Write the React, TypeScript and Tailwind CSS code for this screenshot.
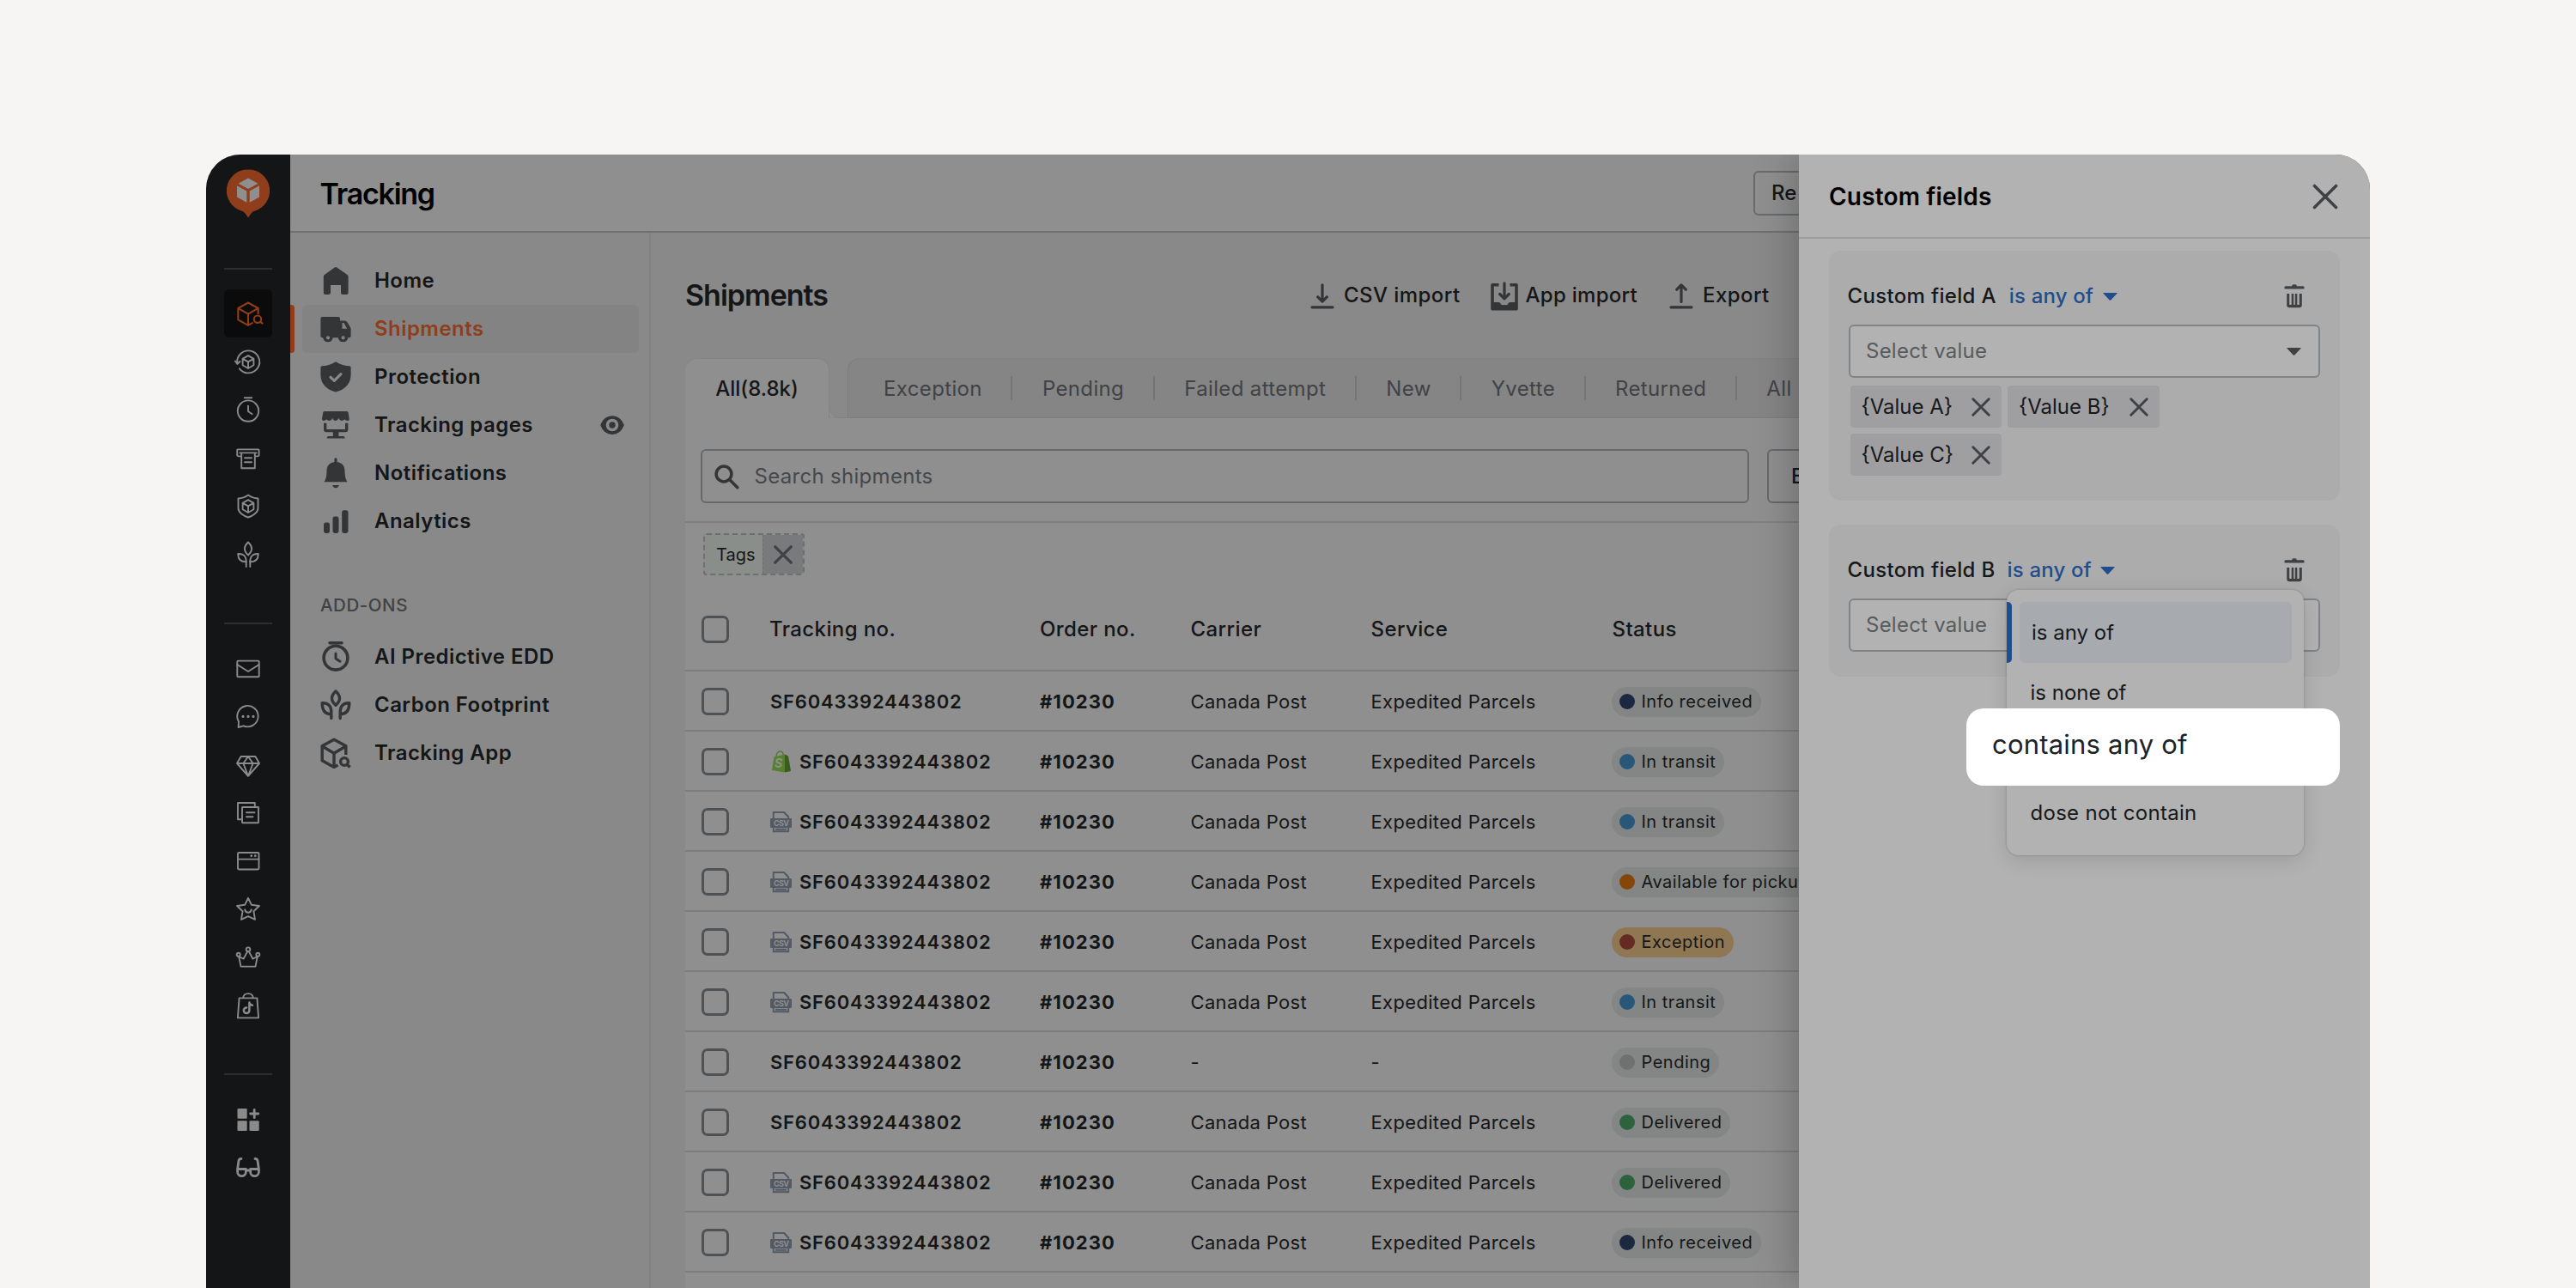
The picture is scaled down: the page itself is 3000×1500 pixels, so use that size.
import type { ReactNode } from "react";

type Source = "none" | "shopify" | "csv";

const rows: { source: Source; carrier: string; service: string; status: string }[] = [
    { source: "none", carrier: "Canada Post", service: "Expedited Parcels", status: "Info received" },
    { source: "shopify", carrier: "Canada Post", service: "Expedited Parcels", status: "In transit" },
    { source: "csv", carrier: "Canada Post", service: "Expedited Parcels", status: "In transit" },
    { source: "csv", carrier: "Canada Post", service: "Expedited Parcels", status: "Available for pickup" },
    { source: "csv", carrier: "Canada Post", service: "Expedited Parcels", status: "Exception" },
    { source: "csv", carrier: "Canada Post", service: "Expedited Parcels", status: "In transit" },
    { source: "none", carrier: "-", service: "-", status: "Pending" },
    { source: "none", carrier: "Canada Post", service: "Expedited Parcels", status: "Delivered" },
    { source: "csv", carrier: "Canada Post", service: "Expedited Parcels", status: "Delivered" },
    { source: "csv", carrier: "Canada Post", service: "Expedited Parcels", status: "Info received" },
];

const dotColors: Record<string, string> = {
    "Info received": "bg-[#1b2840]",
    "In transit": "bg-[#28577a]",
    "Available for pickup": "bg-[#844709]",
    Exception: "bg-[#652b22]",
    Pending: "bg-[#6f7070]",
    Delivered: "bg-[#2c633c]",
};

const tabs = ["Exception", "Pending", "Failed attempt", "New", "Yvette", "Returned", "All"];

/* ---------- icons ---------- */

function RailIcon({ children, width = 1.9 }: { children: ReactNode; width?: number }) {
    return (
        <svg viewBox="0 0 30 30" className="h-[30px] w-[30px] overflow-visible" fill="none" stroke="currentColor" strokeWidth={width} strokeLinejoin="round" strokeLinecap="round">
            {children}
        </svg>
    );
}

function NavIcon({ children }: { children: ReactNode }) {
    return (
        <svg viewBox="0 0 36 36" className="h-9 w-9 shrink-0 overflow-visible text-[#343537]" fill="currentColor">
            {children}
        </svg>
    );
}

const smallCube = <path d="M15 8.2l6.4 3.6v7.5L15 23l-6.4-3.7v-7.5zM8.6 11.8l6.4 3.6 6.4-3.6M15 15.4V23" />;

const railMain = [
    <RailIcon key="return">
        <path d="M2.4 17.5A13 13 0 1 1 4.9 23.3" />
        <path d="M0 14.6l2.5 3.2 3-2.8" />
        {smallCube}
    </RailIcon>,
    <RailIcon key="timer">
        <circle cx="15" cy="16.6" r="12.2" />
        <path d="M10.8 1.2h8.4M15 10.6v6.4l4.6 3.2" />
    </RailIcon>,
    <RailIcon key="receipt">
        <path d="M6.8 13.4H4a1.8 1.8 0 0 1-1.8-1.8V6.4A1 1 0 0 1 3.2 5.4h23.4a1 1 0 0 1 1 1v5.2a1.8 1.8 0 0 1-1.8 1.8H23" />
        <path d="M5.2 9.4h19.4M7.2 9.4v17.8h15.6V9.4M11 15.3h8M11 20.2h8" />
    </RailIcon>,
    <RailIcon key="shield">
        <path d="M15 2.6c3.5 2.5 7.4 3.7 11.5 3.9v11.2c0 5.2-6.500 9.200-11.500 10.800C10 26.900 3.500 22.900 3.500 17.700V6.500C7.600 6.300 11.500 5.100 15 2.600z" />
        {smallCube}
    </RailIcon>,
    <RailIcon key="plant">
        <path d="M15 1.500c5.400 5 5.400 10 0 15-5.400-5-5.400-10 0-15z" />
        <path d="M3.200 15c6-.4 9.500 2.400 9.500 9.400-6.500 0-9.500-3.400-9.500-9.400zM26.800 15c-6-.4-9.500 2.400-9.500 9.400 6.500 0 9.500-3.400 9.500-9.400z" />
        <path d="M12.700 24v6M17.300 24v6" />
    </RailIcon>,
];

const railApps = [
    <RailIcon key="mail">
        <rect x="2.300" y="5.600" width="25.400" height="18.700" rx="1" />
        <path d="M2.300 10l12.700 8 12.700-8" />
    </RailIcon>,
    <RailIcon key="chat">
        <path d="M3.600 27l.4-6.600A12.200 12.200 0 1 1 9.600 25.300z" />
        <path d="M9 14.400h.01M15 14.400h.01M21 14.400h.01" strokeWidth="3.200" />
    </RailIcon>,
    <RailIcon key="diamond">
        <path d="M6.600 5h16.800l4.600 8-13 14.800L2 13zM2 13h26M15 5l-5.600 8L15 27.800 20.600 13z" />
    </RailIcon>,
    <RailIcon key="copy">
        <rect x="8" y="8" width="19" height="18.200" rx=".5" />
        <path d="M8 22.200H3V3h19.800v5M13 14.300h9.500M13 19.300h7.500" />
    </RailIcon>,
    <RailIcon key="window">
        <rect x="3" y="5" width="24.500" height="19.500" rx="1.200" />
        <path d="M3 12.600h24.500" />
        <path d="M18.800 8.700h.01M23.300 8.700h.01" strokeWidth="2.800" />
    </RailIcon>,
    <RailIcon key="star">
        <path d="M15 1.800l3.900 8 9 1.200-6.500 6.200 1.600 9.700L15 23.200l-8 3.700 1.600-9.700L2.100 11l9-1.200z" />
        <path d="M11.200 15.200c1 4.800 6.600 4.800 7.600 0" />
    </RailIcon>,
    <RailIcon key="crown">
        <path d="M4.200 14l2.300 11.600h17L25.800 14l-5.400 2.600L15.900 8.200h-1.800L9.600 16.600z" />
        <circle cx="15" cy="5.700" r="2.300" />
        <circle cx="3.700" cy="11.800" r="2" />
        <circle cx="26.300" cy="11.800" r="2" />
    </RailIcon>,
    <RailIcon key="bag">
        <path d="M4.600 6.400h20.800l1.700 23H2.900zM9 6.400c1-7 11-7 12 0" />
        <path d="M16.400 11.600v9.200a3.300 3.300 0 1 1-3.300-3.300M16.400 11.600c.4 2 1.600 3 3.600 3.200" strokeWidth="2.500" />
    </RailIcon>,
];

function BoxSearch() {
    return (
        <RailIcon width={2.1}>
            <path d="M19.800 26.200L15 28.800 3.300 22.300V9L15 2.500 26.700 9v6.200M3.300 9L15 15.700 26.700 9M15 15.700v13.100" />
            <circle cx="26" cy="21.700" r="4.200" />
            <path d="M29.200 24.600l2.300 2" />
        </RailIcon>
    );
}

function Logo() {
    return (
        <svg viewBox="0 0 50 57" className="h-[57px] w-[50px]">
            <path d="M25 .5a24.600 24.600 0 0 1 7.500 48.200c-2 .8-3.300 1.600-4.400 3.300L25 56.500 21.900 52c-1.100-1.700-2.400-2.500-4.400-3.300A24.600 24.600 0 0 1 25 .5z" fill="#8f3d1b" />
            <path d="M25 10.500l11.500 6.300L25 23 13.500 16.800z" fill="#8f8f8f" />
            <path d="M12 19.300l11.300 6.200v13.300L12 32.400zM38 19.300l-11.300 6.200v13.300L38 32.400z" fill="#8f8f8f" />
        </svg>
    );
}

const navItems: { label: string; icon: ReactNode }[] = [
    {
        label: "Home",
        icon: <path d="M16.700 2.500q1.300-1 2.600 0l12.200 8.500q1.100.9 1.100 2.300v18.500q0 2.200-2.200 2.200h-4.200q-2.200 0-2.200-2.200V23H12v8.800Q12 34 9.800 34H6q-2.200 0-2.200-2.200V13.300q0-1.400 1.100-2.300z" />,
    },
    {
        label: "Shipments",
        icon: (
            <path
                fillRule="evenodd"
                d="M2.400 4h18.600q2 0 2 2v2.400h5.500q1.800 0 2.800 1.500l3.900 6.600q.4.700.4 1.500v8.300q0 2-2 2h-1.300a5.800 5.800 0 0 1-11.500 0h-6.100a5.800 5.800 0 0 1-11.500 0H2.400q-2 0-2-2V6q0-2 2-2zM25.500 11v6.800h5.700l-3.700-6.800zM9 26.200a2.100 2.100 0 1 0 0 4.200 2.100 2.100 0 0 0 0-4.200zM26.600 26.200a2.100 2.100 0 1 0 0 4.200 2.100 2.100 0 0 0 0-4.200z"
            />
        ),
    },
    {
        label: "Protection",
        icon: (
            <>
                <path d="M18 .3c5.500 3.600 11 5 16 5q1.600 0 1.600 1.600v8.500c0 10-6.600 17.300-17.600 20C7 32.700.4 25.400.4 15.400V6.900Q.4 5.300 2 5.300c5 0 10.500-1.400 16-5z" />
                <path d="M12 18.300l4.300 4 7.700-7.600" fill="none" stroke="#898989" strokeWidth="3.200" strokeLinecap="round" strokeLinejoin="round" />
            </>
        ),
    },
    {
        label: "Tracking pages",
        icon: (
            <>
                <path d="M4.800 2h26q1.500 0 1.800 1.500l1.200 7.500q0 2-2 2-2.200 0-3.400-1.700-1.300 1.700-3.600 1.700t-3.400-3q-1.100 3-3.600 3t-3.500-3q-1.200 3-3.600 3t-3.500-1.700Q6.200 13 4 13q-2 0-2-2l1.200-7.500Q3.400 2 4.800 2z" />
                <path d="M5.700 15.700v7.600q0 1.400 1.400 1.400h22.200q1.400 0 1.400-1.400v-7.600" fill="none" stroke="currentColor" strokeWidth="3.300" />
                <path d="M14.800 25h6.600v6h5.400q1.900 0 1.900 2.600H7.700q0-2.600 1.900-2.600h5.200z" />
            </>
        ),
    },
    {
        label: "Notifications",
        icon: (
            <>
                <path d="M16.400 1.800a1.600 1.600 0 0 1 3.200 0V5c5.500.8 8.900 4.600 8.900 10.200 0 6.500 1 9.500 3 13H4.500c2-3.500 3-6.500 3-13C7.500 9.600 10.900 5.800 16.400 5z" />
                <path d="M14.200 32h7.600c-.6 2.200-1.900 3.300-3.800 3.300s-3.200-1.100-3.800-3.300z" />
            </>
        ),
    },
    {
        label: "Analytics",
        icon: (
            <>
                <rect x="4" y="19.500" width="7" height="12.500" rx="2.400" />
                <rect x="14.500" y="12.500" width="7" height="19.500" rx="2.400" />
                <rect x="25.200" y="5.200" width="7.300" height="26.800" rx="2.400" />
            </>
        ),
    },
];

const addOns: { label: string; icon: ReactNode }[] = [
    {
        label: "AI Predictive EDD",
        icon: (
            <g fill="none" stroke="currentColor" strokeWidth="3.600" strokeLinecap="round" strokeLinejoin="round">
                <circle cx="18" cy="19.200" r="13.900" />
                <path d="M11 1.700h14" />
                <path d="M18 14v6l5 3.200" strokeWidth="3" />
            </g>
        ),
    },
    {
        label: "Carbon Footprint",
        icon: (
            <g fill="none" stroke="currentColor" strokeWidth="3.400" strokeLinecap="round" strokeLinejoin="round">
                <path d="M18 2c6 5.500 6 11 0 16.300C12 13 12 7.500 18 2z" />
                <path d="M2.200 15.800c7-.4 10.600 3.200 10.600 10.800v7M12.800 28.800C5.600 28.800 2.200 24 2.200 15.800M33.800 15.800c-7-.4-10.600 3.200-10.600 10.800v7M23.200 28.800c7.200 0 10.600-4.800 10.600-13" />
            </g>
        ),
    },
    {
        label: "Tracking App",
        icon: (
            <g fill="none" stroke="currentColor" strokeWidth="3.400" strokeLinejoin="round">
                <path d="M20.500 32L16 34.400 2.200 26.800V9.800L16 2.200 29.800 9.800V20M2.200 10L16 18.200 29.800 10M16 18v16.400" />
                <circle cx="28" cy="28" r="4.400" />
                <path d="M31 31.200l3.600 3.400" />
            </g>
        ),
    },
];

function Cross({ size, width }: { size: number; width: number }) {
    return (
        <svg width={size} height={size} viewBox="0 0 22 22" className="shrink-0 text-[#3f4244]" stroke="currentColor" strokeWidth={width} strokeLinecap="round">
            <path d="M1.800 1.800l18.400 18.400M20.200 1.800L1.800 20.200" />
        </svg>
    );
}

function Trash() {
    return (
        <svg viewBox="0 0 24 28" className="h-7 w-6 text-[#3f4244]" fill="currentColor">
            <path fillRule="evenodd" d="M9 2.300Q9.300.3 11 .3h2q1.700 0 2 2h7.200q1.500 0 1.500 1.600t-1.500 1.600H1.800Q.3 5.500.3 3.900t1.500-1.600z" />
            <path fillRule="evenodd" d="M3.200 11h3v12.200q0 .8.800.8h10q.8 0 .8-.8V11h3v13q0 3.200-3.200 3.200H6.400Q3.200 27.200 3.200 24z" />
            <path d="M8.700 11h2.500v13.500H8.700zM12.800 11h2.500v13.500h-2.500z" />
        </svg>
    );
}

function Caret({ className }: { className: string }) {
    return (
        <svg viewBox="0 0 17 9" className={`h-[9px] w-[17px] ${className}`} fill="currentColor">
            <path d="M.8 0h15.400q.9 0 .3.800L9.300 8.500q-.8.700-1.600 0L.5.800Q-.1 0 .8 0z" />
        </svg>
    );
}

function SourceIcon({ source }: { source: Source }) {
    if (source === "none") return null;
    if (source === "shopify") {
        return (
            <svg viewBox="0 0 25 26" className="mr-[9px] h-[26px] w-[25px] shrink-0 overflow-visible">
                <path d="M7 7c1-8 8-8 8.500-.5" fill="none" stroke="#567a2c" strokeWidth="1.400" />
                <path d="M4.500 7.500L17 4.500v21L2 23z" fill="#56802c" />
                <path d="M17 4.500l4 2L24 24l-7 1.500z" fill="#3a5c1f" />
                <text x="5" y="20" className="font-['Inter',sans-serif] text-[14px] font-bold tracking-normal italic" fill="#8f8f8f">S</text>
            </svg>
        );
    }
    return (
        <svg viewBox="0 0 25 26" className="mr-[9px] h-[26px] w-[25px] shrink-0 overflow-visible">
            <path d="M3.800 10V2h12.400l5 5.500V10M3.800 19v5.300h17.400V19M6 21.700h13" fill="none" stroke="#525a65" strokeWidth="2" />
            <rect x="0" y="9" width="25" height="11" rx="1" fill="#525a65" />
            <text x="4" y="18" className="font-['Inter',sans-serif] text-[9px] font-bold tracking-[-0.7px]" fill="#8f8f8f">CSV</text>
        </svg>
    );
}

/* ---------- pieces ---------- */

function NavRow({ label, icon, active }: { label: string; icon: ReactNode; active?: boolean }) {
    return (
        <div className="flex h-14 gap-[9px]">
            <div className={`w-[5px] rounded-r-[4px] ${active ? "bg-[#8f3d1b]" : ""}`} />
            <div className={`flex w-[392px] items-center rounded-md pl-[20.5px] ${active ? "bg-[#838383]" : ""}`}>
                <NavIcon>{icon}</NavIcon>
                <span className={`mt-px ml-[27.5px] text-[24px] font-semibold tracking-[0.45px] ${active ? "text-[#8f3d1b]" : "text-[#141617]"}`}>{label}</span>
                {label === "Tracking pages" && (
                    <svg viewBox="0 0 28 22" className="mr-[17px] ml-auto h-[22px] w-7 text-[#343537]" fill="none" stroke="currentColor">
                        <path d="M1 11C6-2.500 22-2.500 27 11 22 24.500 6 24.500 1 11z" fill="currentColor" strokeWidth="1.500" strokeLinejoin="round" />
                        <circle cx="14" cy="11" r="5.500" stroke="#898989" strokeWidth="3.600" />
                    </svg>
                )}
            </div>
        </div>
    );
}

function Checkbox() {
    return <div className="ml-[19px] h-8 w-8 rounded-[7px] border-[3.5px] border-[#4e5254]" />;
}

function Badge({ status }: { status: string }) {
    return (
        <div className={`flex h-[35px] w-max items-center rounded-full pr-[10px] pl-[9px] ${status === "Exception" ? "bg-[#8f7753]" : "bg-[#838684]"}`}>
            <span className={`h-[18px] w-[18px] rounded-full ${dotColors[status]}`} />
            <span className="-mt-px ml-[8px] text-[20px] tracking-[0.5px]">{status}</span>
        </div>
    );
}

const tableCols = "grid grid-cols-[98px_315px_175.500px_210px_280px_1fr] items-center";

function Chip({ label }: { label: string }) {
    return (
        <div className="flex h-[49px] w-[176.5px] items-center justify-between rounded-[4px] bg-[#9f9fa1] pr-[13px] pl-[13px] text-[24px]">
            <span className="mt-0.5">{label}</span>
            <Cross size={22} width={3} />
        </div>
    );
}

function FieldCard({ label, gap, children }: { label: string; gap: string; children?: ReactNode }) {
    return (
        <div className="w-[595px] rounded-[14px] bg-[#acacac] pt-[31px] pr-[23.5px] pb-[29px] pl-[23px]">
            <div className="-ml-[1.5px] flex h-11 items-center text-[24px] font-medium">
                <span className="mt-px tracking-[0.33px]">{label}</span>
                <span className={`mt-px tracking-[0.15px] text-[#1f4d8e] ${gap}`}>is any of</span>
                <Caret className="ml-[10.5px] text-[#1f4d8e]" />
                <span className="mr-[18px] ml-auto">
                    <Trash />
                </span>
            </div>
            <div className="mt-[11px] flex h-[62px] items-center justify-between rounded-md border-2 border-[#7f8488] bg-[#b2b2b2] pr-5 pl-[18px]">
                <span className="mt-px text-[24px] tracking-[0.24px] text-[#585b5d]">Select value</span>
                <Caret className="text-[#3f4244]" />
            </div>
            {children}
        </div>
    );
}

function Drawer() {
    return (
        <div className="absolute top-0 right-0 h-full w-[665px] bg-[#b2b2b2] text-[#161819] shadow-[-4px_0_44px_rgba(0,0,0,0.25)]">
            <div className="flex h-[98px] items-center justify-between border-b-2 border-[#9c9c9c] pt-0.5 pr-[37.5px] pl-[35px]">
                <h2 className="mt-0.5 text-[28px] font-semibold tracking-[0.18px] text-black">Custom fields</h2>
                <Cross size={30} width={2.600} />
            </div>
            <div className="flex flex-col gap-[28px] pt-[14px] pl-[35px]">
                <FieldCard label="Custom field A" gap="ml-[15px]">
                    <div className="mt-[9px] ml-[1.5px] flex w-[380px] flex-wrap gap-[7px]">
                        <Chip label="{Value A}" />
                        <Chip label="{Value B}" />
                        <Chip label="{Value C}" />
                    </div>
                </FieldCard>
                <FieldCard label="Custom field B" gap="ml-[14px]" />
            </div>

            {/* operator menu */}
            <div className="absolute top-[507px] left-[242px] h-[309px] w-[346px] rounded-[14px] bg-[#b2b2b2] pt-[14px] text-[24px] shadow-[0_0_0_1.5px_rgba(0,0,0,0.07),0_6px_24px_rgba(0,0,0,0.12)]">
                <div className="flex h-[71px] gap-[9px]">
                    <div className="w-[6px] rounded-r-[5px] bg-[#1f4d8e]" />
                    <div className="flex w-[317px] items-center rounded-md bg-[#a7abb0] pt-px pl-[14px]">is any of</div>
                </div>
                <div className="flex h-[70px] items-center pl-[27.5px]">is none of</div>
                <div className="relative h-[70px]">
                    <div className="absolute -top-[17px] -left-[47px] flex h-[90px] w-[435px] items-center rounded-[20px] bg-white pl-[30px] text-[31px] tracking-[0.2px] text-[#202223]">
                        <span className="-mt-[6px]">contains any of</span>
                    </div>
                </div>
                <div className="flex h-[70px] items-center pl-[27.5px] tracking-[0.29px]">dose not contain</div>
            </div>
        </div>
    );
}

export default function App() {
    return (
        <div className="h-[1500px] w-[3000px] overflow-hidden bg-[#f6f5f3] pt-[180px] pl-[240px] font-['Inter','Liberation_Sans',sans-serif] leading-[1.2] whitespace-nowrap">
            <div className="relative flex h-[1320px] w-[2520px] overflow-hidden rounded-t-[40px] bg-[#898989]">
                {/* app rail */}
                <div className="flex w-[98px] shrink-0 flex-col items-center bg-[#141517] pt-[17px] text-[#8b8b8b]">
                    <Logo />
                    <div className="mt-[58px] mb-[23px] h-0.5 w-14 bg-[#2d2e30]" />
                    <div className="flex h-14 w-14 items-center justify-center rounded-md bg-[#0a0b0a] text-[#8f3d1b]">
                        <BoxSearch />
                    </div>
                    {railMain.map((icon, i) => (
                        <div key={i} className="flex h-14 items-center">{icon}</div>
                    ))}
                    <div className="mt-[52px] mb-6 h-0.5 w-14 bg-[#2d2e30]" />
                    {railApps.map((icon, i) => (
                        <div key={i} className="flex h-14 items-center">{icon}</div>
                    ))}
                    <div className="mt-[51px] mb-6 h-0.5 w-14 bg-[#2d2e30]" />
                    <div className="flex h-14 items-center">
                        <RailIcon>
                            <g fill="currentColor" stroke="none">
                                <rect x="2.500" y="2" width="11.200" height="11.800" rx="1" />
                                <rect x="2.500" y="16.200" width="11.200" height="11.800" rx="1" />
                                <rect x="16.500" y="16.200" width="11.200" height="11.800" rx="1" />
                            </g>
                            <path d="M22.200 3.300v9.400M17.600 8h9.200" strokeWidth="2.800" />
                        </RailIcon>
                    </div>
                    <div className="flex h-14 items-center">
                        <RailIcon width={2.800}>
                            <path d="M7 4.500c-2 0-2.700.6-3 2.300L2.600 16.500v3.200a4.900 4.900 0 0 0 9.800 0v-3.200H2.600M23 4.500c2 0 2.700.6 3 2.300l1.400 9.700v3.200a4.900 4.900 0 0 1-9.800 0v-3.200h9.800M12.400 18h5.200" />
                        </RailIcon>
                    </div>
                </div>

                <div className="flex flex-1 flex-col">
                    <div className="flex h-[91px] shrink-0 items-center border-b-2 border-[#707070] bg-[#8f8f8f] pl-[34.5px]">
                        <h1 className="mt-[3px] text-[34px] font-semibold tracking-[-1.25px] text-black">Tracking</h1>
                        <div className="mr-[538px] ml-auto flex h-[52px] w-[180px] items-center rounded-md border-2 border-[#686b6d] pt-0.5 pl-[19px] text-[24px] font-medium text-[#141617]">Re</div>
                    </div>

                    <div className="flex flex-1">
                        <nav className="w-[420px] shrink-0 border-r-2 border-[#818181] pt-7">
                            {navItems.map((item) => (
                                <NavRow key={item.label} {...item} active={item.label === "Shipments"} />
                            ))}
                            <div className="mt-[54px] mb-4 flex h-8 items-center pl-[35px] text-[20.5px] font-medium tracking-[0.56px] text-[#404245]">ADD-ONS</div>
                            {addOns.map((item) => (
                                <NavRow key={item.label} {...item} />
                            ))}
                        </nav>

                        <main className="flex w-[2002px] flex-col pl-10 text-[#141617]">
                            <div className="flex h-[146px] shrink-0 items-center pt-px text-[24px] font-medium">
                                <h2 className="w-[724px] text-[34px] font-semibold tracking-[-1px]">Shipments</h2>
                                <div className="flex items-center gap-[33px] text-[#141617]">
                                    <div className="flex items-center gap-[7px] tracking-[0.45px]">
                                        <svg viewBox="0 0 36 36" className="h-9 w-9 text-[#343537]" fill="none" stroke="currentColor" strokeWidth="3.200" strokeLinecap="round" strokeLinejoin="round">
                                            <path d="M18 4.800v19M12.700 18.800l5.300 5.300 5.300-5.300M6 30.800h24" />
                                        </svg>
                                        CSV import
                                    </div>
                                    <div className="flex items-center gap-[7px] tracking-[0.28px]">
                                        <svg viewBox="0 0 36 36" className="h-9 w-9 text-[#343537]" fill="none" stroke="currentColor" strokeWidth="3.200" strokeLinecap="round" strokeLinejoin="round">
                                            <path d="M18 2.800v17M12.700 15.500l5.300 5.300 5.300-5.300" />
                                            <path d="M11.500 4.800H4v28h28v-28h-7.500" strokeWidth="3.600" strokeLinecap="butt" />
                                            <path d="M4 25.500h8.200l2.600 3.200h6.400l2.600-3.200H32V33H4z" fill="currentColor" strokeWidth="1" />
                                        </svg>
                                        App import
                                    </div>
                                    <div className="flex items-center gap-[7px] tracking-[0.43px]">
                                        <svg viewBox="0 0 36 36" className="h-9 w-9 text-[#343537]" fill="none" stroke="currentColor" strokeWidth="3.200" strokeLinecap="round" strokeLinejoin="round">
                                            <path d="M18 24.500V5M12.700 10.200L18 4.900l5.300 5.300M6 30.800h24" />
                                        </svg>
                                        Export
                                    </div>
                                </div>
                            </div>

                            <div className="flex h-[70px] shrink-0 text-[24px]">
                                <div className="flex w-[168px] shrink-0 items-center justify-center rounded-t-[14px] border-t border-r border-t-[#858585] border-r-[#858585] bg-[#8f8f8f] pt-0.5 font-medium">All(8.8k)</div>
                                <svg viewBox="0 0 21 70" className="h-[70px] w-[21px] shrink-0">
                                    <path d="M-1 50Q-1 69.500 12 69.500H21V70H-1z" fill="#8f8f8f" stroke="#838383" strokeWidth="1" />
                                </svg>
                                <div className="flex min-w-0 flex-1 items-center rounded-tl-[14px] border border-r-0 border-[#7d7d7d] border-t-[#818181] bg-[#858585] pl-[6.5px] text-[#404245]">
                                    {tabs.map((tab) => (
                                        <div key={tab} className="flex h-[28px] items-center border-r-2 border-[#757575] pt-[3px] pr-[33.5px] pl-[34.5px] tracking-[0.36px]">{tab}</div>
                                    ))}
                                </div>
                            </div>

                            <div className="flex-1 bg-[#8f8f8f]">
                                <div className="flex h-[122px] gap-[21px] border-b-2 border-[#7f7f7f] pt-9 pl-[18px]">
                                    <div className="flex h-[63px] w-[1221px] items-center rounded-md border-2 border-[#66696b] pt-0.5 pl-[14px] text-[24px] tracking-[0.3px] text-[#45484b]">
                                        <svg viewBox="0 0 29 29" className="mr-[17.5px] h-[29px] w-[29px] text-[#343537]" fill="none" stroke="currentColor" strokeWidth="3.500" strokeLinecap="round">
                                            <circle cx="11" cy="11" r="8.900" />
                                            <path d="M17.600 17.600l9.200 9.200" />
                                        </svg>
                                        Search shipments
                                    </div>
                                    <div className="flex h-[63px] w-[160px] items-center rounded-md border-2 border-[#66696b] pt-0.5 pl-[26px] text-[24px] font-medium">E</div>
                                </div>

                                <div className="flex h-[75px] pt-3 pl-[21px] text-[20px]">
                                    <div className="flex h-[49px] w-[118px] overflow-hidden rounded-[4px] border-2 border-dashed border-[#6d7071] bg-[#8a8e8b]">
                                        <div className="flex w-[67px] items-center pl-[13px]">Tags</div>
                                        <div className="flex flex-1 items-center justify-center border-l border-dashed border-[#6d7071] bg-[#797a7c]">
                                            <Cross size={22} width={3.300} />
                                        </div>
                                    </div>
                                </div>

                                <div className={`${tableCols} h-[98px] border-b-2 border-[#7d7d7d] pt-0.5 text-[24px] font-medium tracking-[0.4px]`}>
                                    <Checkbox />
                                    <span className="mt-px">Tracking no.</span>
                                    <span className="mt-px">Order no.</span>
                                    <span className="mt-px">Carrier</span>
                                    <span className="mt-px">Service</span>
                                    <span className="mt-px ml-px">Status</span>
                                </div>
                                {rows.map((row, i) => (
                                    <div key={i} className={`${tableCols} h-[70px] border-b-2 border-[#7d7d7d] pt-0.5 text-[22px] tracking-[0.34px]`}>
                                        <Checkbox />
                                        <div className="flex items-center pt-px pl-px font-semibold tracking-[0.8px]">
                                            <SourceIcon source={row.source} />
                                            SF6043392443802
                                        </div>
                                        <span className="mt-px font-bold tracking-[1.07px]">#10230</span>
                                        <span className="mt-px">{row.carrier}</span>
                                        <span className="mt-px">{row.service}</span>
                                        <Badge status={row.status} />
                                    </div>
                                ))}
                            </div>
                        </main>
                    </div>
                </div>

                <Drawer />
            </div>
        </div>
    );
}
